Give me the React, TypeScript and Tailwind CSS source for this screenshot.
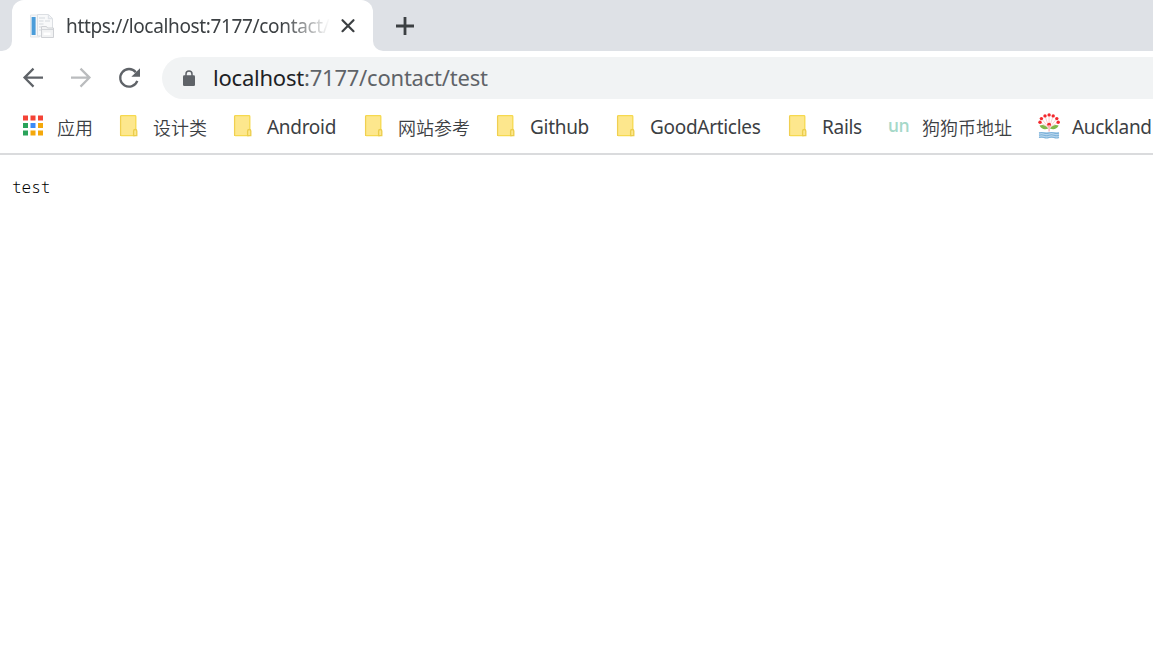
import type { ReactNode } from 'react';

function FolderIcon() {
  return (
    <svg width="20" height="24" viewBox="0 0 20 24" className="shrink-0">
      <rect x="1.6" y="1.6" width="15.2" height="20" rx="0.8" fill="#fde78d" stroke="#f6d94f" strokeWidth="1.3" />
      <path d="M1.5 2v20" stroke="#f0cf52" strokeWidth="1" />
      <path d="M14.6 21.7v-4.7q0-1.5 1.6-1.5t1.6 1.5v4.7z" fill="#fde78d" stroke="#ebcd4c" strokeWidth="1.3" />
    </svg>
  );
}

function AppsIcon() {
  const colors = ['#f44336', '#f44336', '#f44336', '#2aa35a', '#3b8af6', '#f4a80b', '#2aa35a', '#f4a80b', '#f4a80b'];
  return (
    <svg width="22" height="24" viewBox="0 0 22 24" className="shrink-0">
      {colors.map((c, i) => (
        <rect key={i} x={1 + (i % 3) * 7.5} y={1.5 + Math.floor(i / 3) * 7.5} width="5" height="5" fill={c} />
      ))}
    </svg>
  );
}

function FlowerIcon() {
  const dots = [[2, 9.3], [3.4, 5.6], [7, 2.9], [11.1, 1.9], [15.2, 2.9], [18.8, 5.6], [20.2, 9.3]];
  return (
    <svg width="22" height="26" viewBox="0 0 22 26" className="shrink-0">
      {dots.map(([x, y]) => (
        <path key={x} d={`M11.1 15L${x} ${y}`} stroke="#fbc9c9" strokeWidth="0.9" />
      ))}
      {dots.map(([x, y]) => (
        <circle key={x} cx={x} cy={y} r="1.7" fill="#f3292e" />
      ))}
      <circle cx="11.1" cy="11.6" r="1.9" fill="#f3292e" />
      <path d="M11.1 12v6.5" stroke="#f7b5b5" strokeWidth="1.4" />
      <path d="M10.3 15.6Q6.5 10.6 1.5 12.6Q4.5 18 10.3 15.6zM11.9 15.6Q15.7 10.6 20.7 12.6Q17.7 18 11.9 15.6z" fill="#80b84b" />
      <path d="M1 19h20v6H1z" fill="#b9d6ec" />
      <path d="M1 20q2.5-1 5 0t5 0t5 0t5 0M1 22.3q2.5-1 5 0t5 0t5 0t5 0M1 24.5q2.5-1 5 0t5 0t5 0t5 0" fill="none" stroke="#7eb3da" strokeWidth="1.1" />
    </svg>
  );
}

function PageIcon() {
  return (
    <svg width="26" height="26" viewBox="0 0 26 26" className="shrink-0">
      <path d="M1.5 2h9v22h-9z" fill="#f5f7f9" stroke="#e3e6e9" />
      <path d="M2.6 4h4v18H2.6z" fill="#4b9dda" />
      <path d="M8.5 1.5h11l4 4V23h-15z" fill="#f8f9fa" stroke="#dcdfe3" />
      <path d="M19.5 1.5v4h4M10 5h6M10 8h4.5M16 8h5M10 11h4.5M10 14h2M10 17h2" fill="none" stroke="#dfe3e8" strokeWidth="1.4" />
      <path d="M12.5 13.5h5l1 1.5h6v9.5h-12z" fill="#f1f2f3" stroke="#cfd1d5" />
      <path d="M13 16.5h11" stroke="#d3d6da" />
      <path d="M14.5 19.5h7v2.5h-7z" fill="#fff" />
    </svg>
  );
}

function Bookmark({ icon, label, className, labelClass = 'top-px text-[19px] tracking-[-0.3px]' }: { icon: ReactNode; label: string; className: string; labelClass?: string }) {
  return (
    <div className={`flex h-full shrink-0 items-center ${className}`}>
      <div className="flex w-[34px] shrink-0 items-center">{icon}</div>
      <span className={`relative whitespace-nowrap ${labelClass}`}>{label}</span>
    </div>
  );
}

export default function App() {
  const folder = <FolderIcon />;
  const cjk = "top-px font-['Noto_Sans_CJK_SC',sans-serif] font-[350] text-[18px]";
  return (
    <div className="h-[649px] w-full overflow-hidden bg-white font-['Noto_Sans','Noto_Sans_CJK_SC',sans-serif] text-[#3c4043]">
      <header className="flex h-[51px] bg-white">
        <div className="w-3 shrink-0 rounded-br-[10px] bg-[#dee1e6]" />
        <div className="flex w-[361px] shrink-0 bg-[#dee1e6]">
          <div className="flex h-full w-full items-center rounded-t-[12px] bg-white pl-[17px]">
            <PageIcon />
            <span className="mt-px ml-[11px] w-[264px] whitespace-nowrap text-[19px] tracking-[-0.35px] [mask-image:linear-gradient(to_right,black_82%,transparent)]">
              https://localhost:7177/contact/
            </span>
            <svg width="16" height="16" viewBox="0 0 16 16" className="ml-[10px]">
              <path d="M2.5 2.2l11 11M13.5 2.2l-11 11" stroke="#3c4043" strokeWidth="2.2" strokeLinecap="round" />
            </svg>
          </div>
        </div>
        <div className="flex flex-1 items-center rounded-bl-[10px] bg-[#dee1e6] pl-[22px]">
          <svg width="20" height="20" viewBox="0 0 20 20">
            <path d="M10 1v18M1 10h18" stroke="#3c4043" strokeWidth="2.8" />
          </svg>
        </div>
      </header>

      <nav className="flex h-[49px] pt-[6px]">
        <div className="flex h-[42px] w-[162px] shrink-0 items-center pl-[22px]">
          <svg width="22" height="22" viewBox="0 0 22 22" fill="none" stroke="#5f6368" strokeWidth="2.2">
            <path d="M21 10.6H2.5M11.5 1.6L2.5 10.6l9 9" />
          </svg>
          <svg width="22" height="22" viewBox="0 0 22 22" fill="none" stroke="#babcbe" strokeWidth="2.2" className="ml-[26px]">
            <path d="M1 10.6h18.5M10.5 1.6l9 9l-9 9" />
          </svg>
          <svg width="24" height="24" viewBox="0 0 24 24" className="ml-[25px]">
            <path d="M20.3 14.8A8.8 8.8 0 1 1 18.8 6.2" fill="none" stroke="#5f6368" strokeWidth="2.3" />
            <path d="M23 2.2v8.6h-8.6z" fill="#5f6368" />
          </svg>
        </div>
        <div className="flex h-[42px] flex-1 items-center rounded-l-full bg-[#f1f3f4] pl-[20px]">
          <svg width="14" height="18" viewBox="0 0 14 18">
            <rect x="1" y="6.3" width="12" height="10.7" rx="1.3" fill="#5f6368" />
            <path d="M4 7V5a3 3 0 0 1 6 0V7" fill="none" stroke="#5f6368" strokeWidth="1.5" />
          </svg>
          <span className="-mt-[2px] ml-[17px] whitespace-nowrap text-[22px] tracking-[-0.22px] text-[#5f6368]">
            <span className="text-[#202124]">localhost</span>:7177/contact/test
          </span>
        </div>
      </nav>

      <div className="flex h-[55px] overflow-hidden border-b-2 border-[#dadbdd] pb-[1px] pl-[22px]">
        <Bookmark className="w-[97px]" icon={<AppsIcon />} label="应用" labelClass={`left-px ${cjk}`} />
        <Bookmark className="w-[114px]" icon={folder} label="设计类" labelClass={cjk} />
        <Bookmark className="w-[131px]" icon={folder} label="Android" />
        <Bookmark className="w-[132px]" icon={folder} label="网站参考" labelClass={cjk} />
        <Bookmark className="w-[120px]" icon={folder} label="Github" />
        <Bookmark className="w-[172px]" icon={folder} label="GoodArticles" />
        <Bookmark className="w-[100px]" icon={folder} label="Rails" />
        <Bookmark
          className="w-[150px]"
          icon={<span className="font-['Inter',sans-serif] text-[18px] leading-6 font-medium text-[#a5d8c8]">un</span>}
          label="狗狗币地址"
          labelClass={cjk}
        />
        <Bookmark className="w-[130px]" icon={<FlowerIcon />} label="Auckland" />
      </div>

      <main className="px-3 pt-[20px]">
        <pre className="font-['Noto_Sans_Mono','DejaVu_Sans_Mono',monospace] text-[16px] leading-6 font-light text-black">test</pre>
      </main>
    </div>
  );
}
